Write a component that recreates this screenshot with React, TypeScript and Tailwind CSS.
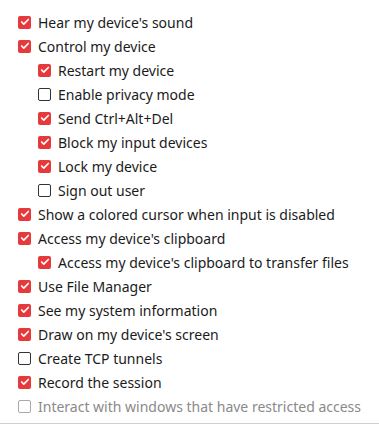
import { Check } from 'lucide-react'

type Item = { label: string; checked: boolean; indent?: boolean; disabled?: boolean }

const items: Item[] = [
  { label: "Hear my device's sound", checked: true },
  { label: 'Control my device', checked: true },
  { label: 'Restart my device', checked: true, indent: true },
  { label: 'Enable privacy mode', checked: false, indent: true },
  { label: 'Send Ctrl+Alt+Del', checked: true, indent: true },
  { label: 'Block my input devices', checked: true, indent: true },
  { label: 'Lock my device', checked: true, indent: true },
  { label: 'Sign out user', checked: false, indent: true },
  { label: 'Show a colored cursor when input is disabled', checked: true },
  { label: "Access my device's clipboard", checked: true },
  { label: "Access my device's clipboard to transfer files", checked: true, indent: true },
  { label: 'Use File Manager', checked: true },
  { label: 'See my system information', checked: true },
  { label: "Draw on my device's screen", checked: true },
  { label: 'Create TCP tunnels', checked: false },
  { label: 'Record the session', checked: true },
  { label: 'Interact with windows that have restricted access', checked: false, disabled: true },
]

function Box({ checked, disabled }: { checked: boolean; disabled?: boolean }) {
  if (checked) {
    return (
      <span className="flex h-[13px] w-[13px] shrink-0 items-center justify-center rounded-[2px] bg-[#e5393c]">
        <Check className="h-[10px] w-[10px] text-white" strokeWidth={4} />
      </span>
    )
  }
  return (
    <span
      className={
        'h-[13px] w-[13px] shrink-0 rounded-[2px] border ' +
        (disabled ? 'border-[#a8a8a8]' : 'border-[#333333]')
      }
    />
  )
}

export default function App() {
  return (
    <div className="h-[426px] w-[379px] bg-white font-['Noto_Sans',sans-serif]">
      <div className="border-b border-[#cfcfcf] pt-[10px] pb-[5px]">
        {items.map(item => (
          <div
            key={item.label}
            className={
              'flex h-[24px] items-center gap-[7px] text-[14px] ' +
              (item.indent ? 'pl-[38px] ' : 'pl-[18px] ') +
              (item.disabled ? 'text-[#8a8a8a]' : 'text-[#1b1b1b]')
            }
          >
            <Box checked={item.checked} disabled={item.disabled} />
            <span className="whitespace-nowrap">{item.label}</span>
          </div>
        ))}
      </div>
    </div>
  )
}
